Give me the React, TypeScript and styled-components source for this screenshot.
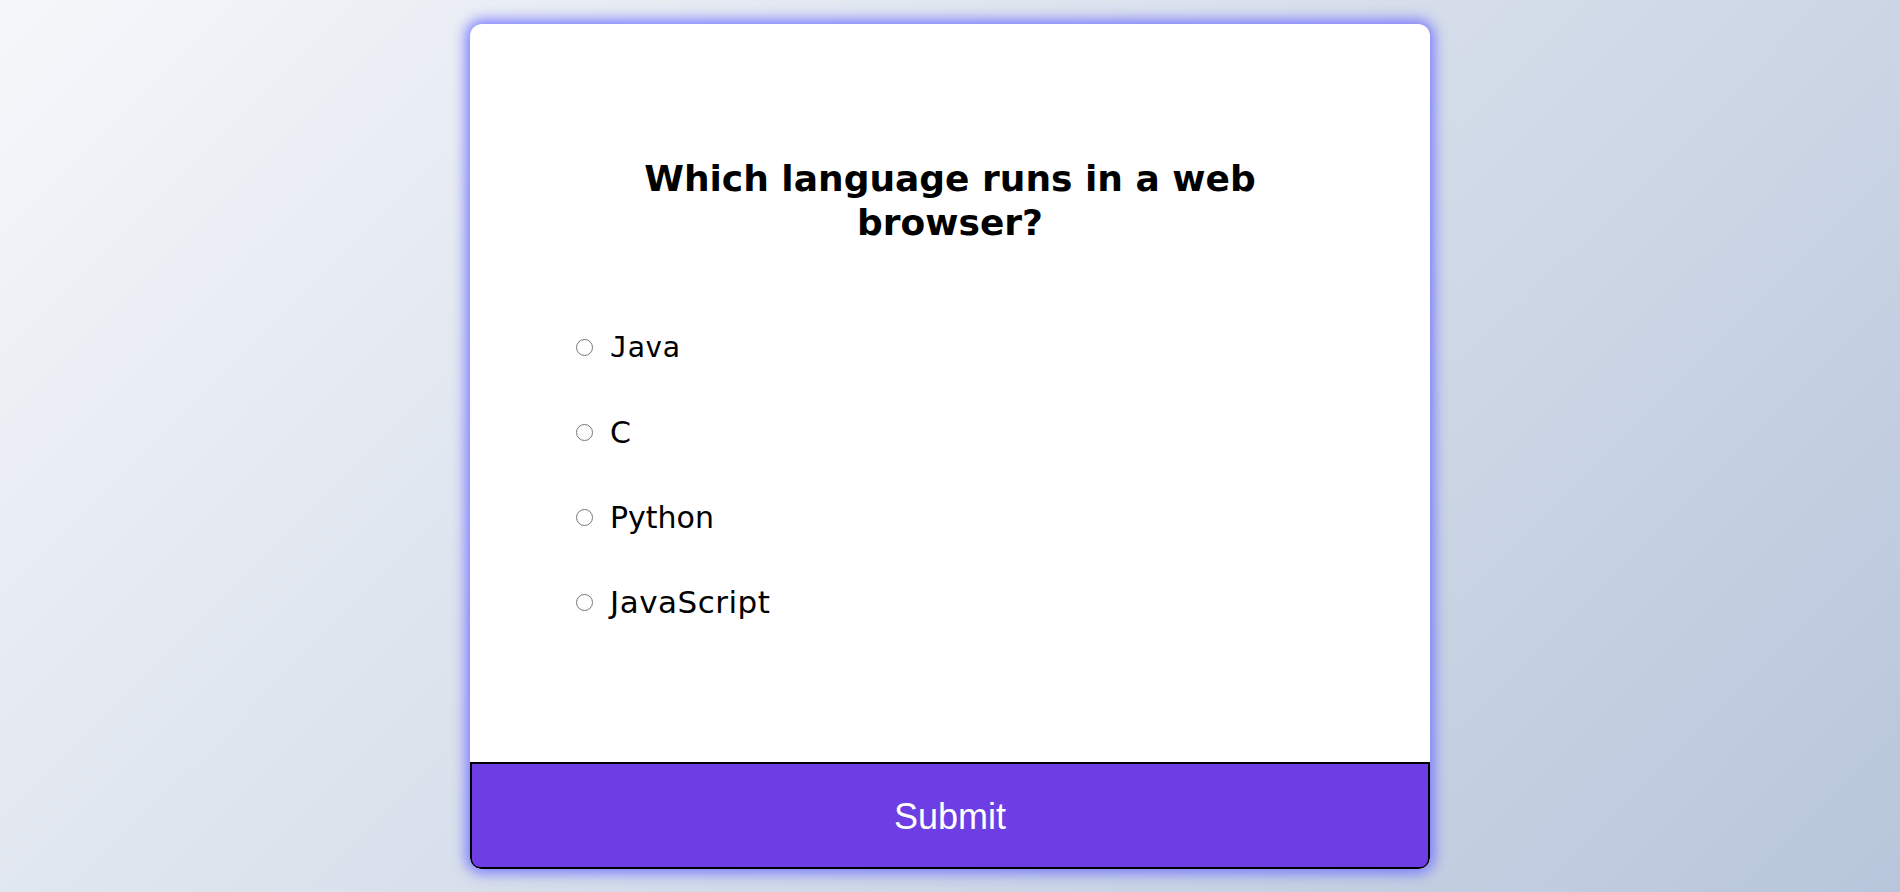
import React from "react";
import styled, { createGlobalStyle } from "styled-components";

const GlobalStyle = createGlobalStyle`
  * { box-sizing: border-box; }
  html, body { margin: 0; padding: 0; }
  body {
    min-height: 100vh;
    background: linear-gradient(135deg, #f5f7fa 0%, #b8c6db 100%);
    font-family: "DejaVu Sans", Verdana, sans-serif;
  }
`;

const Page = styled.div`
  min-height: 100vh;
  display: flex;
  align-items: center;
  justify-content: center;
`;

const Card = styled.div`
  width: 960px;
  height: 845px;
  background: #ffffff;
  border-radius: 12px;
  box-shadow: 0 0 14px 4px rgba(110, 110, 255, 0.9);
  display: flex;
  flex-direction: column;
  overflow: hidden;
`;

const Body = styled.div`
  flex: 1;
  padding: 133px 0 0 105px;
`;

const Title = styled.h2`
  margin: 0 0 0 -105px;
  width: 960px;
  padding: 0 150px;
  text-align: center;
  font-size: 36px;
  font-weight: bold;
  color: #000;
  line-height: 44px;
`;

const Options = styled.ul`
  list-style: none;
  margin: 85px 0 0 0;
  padding: 0;
  display: flex;
  flex-direction: column;
  gap: 50px;
`;

const Option = styled.li`
  display: flex;
  align-items: center;
  height: 35px;
`;

const Radio = styled.input`
  width: 17px;
  height: 17px;
  margin: 0 17px 0 1px;
  accent-color: #6c3ee4;
`;

const Label = styled.label<{ $mono?: boolean; $wide?: boolean }>`
  font-family: ${(p) =>
    p.$mono ? '"DejaVu Sans Mono", monospace' : '"DejaVu Sans", Verdana, sans-serif'};
  font-size: ${(p) => (p.$mono ? "29px" : p.$wide ? "31px" : "30px")};
  letter-spacing: ${(p) => (p.$wide ? "0.5px" : "0")};
  color: #000;
  line-height: 35px;
`;

const SubmitButton = styled.button`
  height: 107px;
  width: 100%;
  padding: 4px 0 0;
  background: #6c3ee4;
  color: #ffffff;
  border: 2px solid #000;
  border-radius: 0 0 10px 10px;
  font-family: "Liberation Sans", Arial, sans-serif;
  font-size: 36px;
  cursor: pointer;
`;

const answers = [
  { id: "a", text: "Java", mono: true, wide: false },
  { id: "b", text: "C", mono: false, wide: false },
  { id: "c", text: "Python", mono: false, wide: false },
  { id: "d", text: "JavaScript", mono: false, wide: true },
];

export default function App() {
  return (
    <>
      <GlobalStyle />
      <Page>
        <Card>
          <Body>
            <Title>Which language runs in a web browser?</Title>
            <Options>
              {answers.map((a) => (
                <Option key={a.id}>
                  <Radio type="radio" name="answer" id={a.id} />
                  <Label htmlFor={a.id} $mono={a.mono} $wide={a.wide}>
                    {a.text}
                  </Label>
                </Option>
              ))}
            </Options>
          </Body>
          <SubmitButton>Submit</SubmitButton>
        </Card>
      </Page>
    </>
  );
}
